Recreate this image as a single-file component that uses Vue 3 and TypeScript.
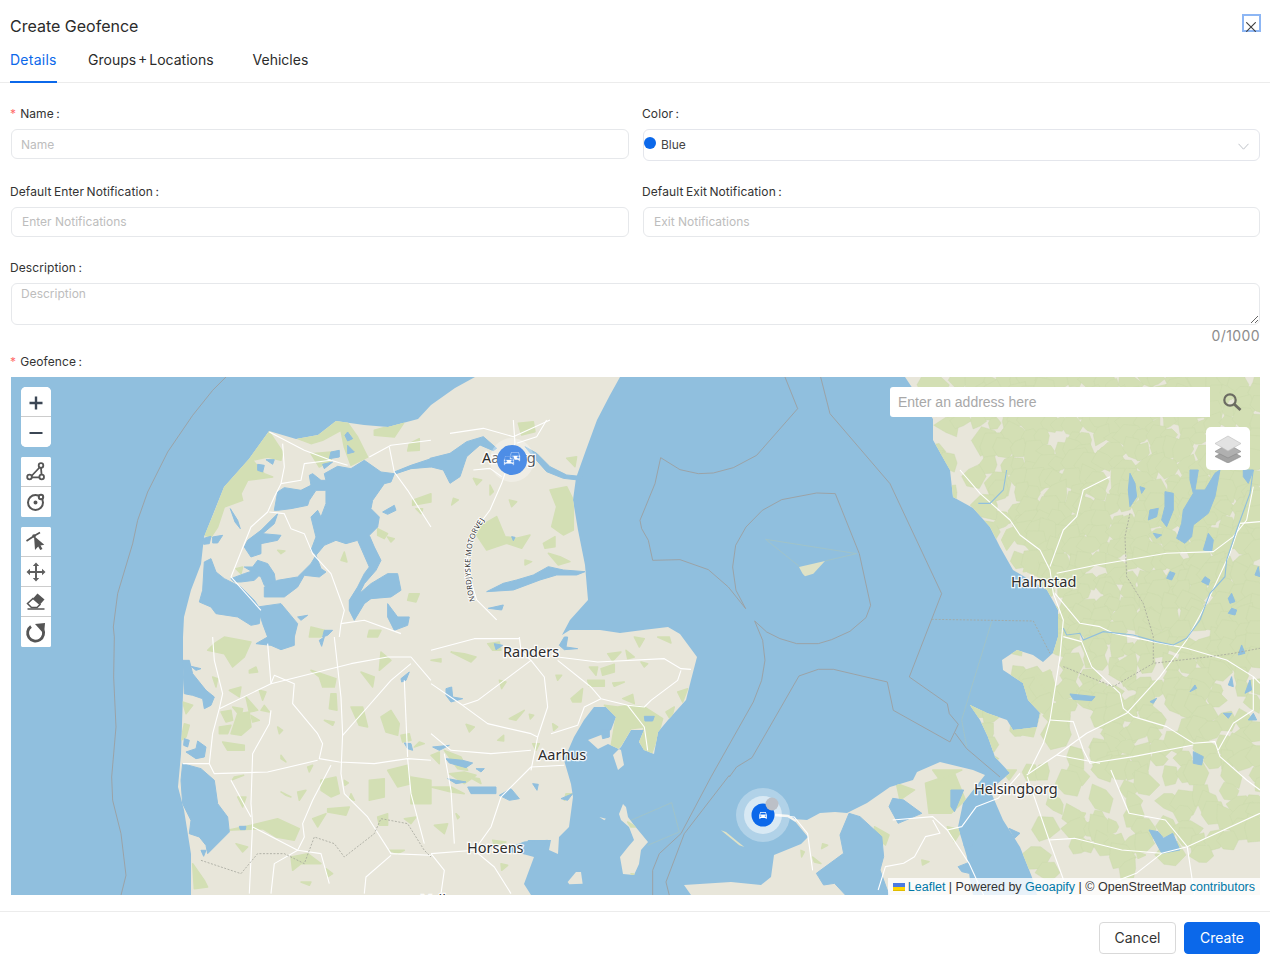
<script setup lang="ts">
import { ref } from 'vue'

const tabs = ['Details', 'Groups + Locations', 'Vehicles']
const activeTab = ref('Details')

// map traced in crop coordinates, each layer has its own origin and scale
interface Layer {
  t: string
  greens: string[]
  lakes: string[]
  roads: string[]
}

const carPath =
  'M18.92 6.01C18.72 5.42 18.16 5 17.5 5h-11c-.66 0-1.21.42-1.42 1.01L3 12v8c0 .55.45 1 1 1h1c.55 0 1-.45 1-1v-1h12v1c0 .55.45 1 1 1h1c.55 0 1-.45 1-1v-8l-2.08-5.99zM6.5 16c-.83 0-1.5-.67-1.5-1.5S5.67 13 6.5 13s1.5.67 1.5 1.5S7.33 16 6.5 16zm11 0c-.83 0-1.5-.67-1.5-1.5s.67-1.5 1.5-1.5 1.5.67 1.5 1.5-.67 1.5-1.5 1.5zM5 11l1.5-4.5h11L19 11H5z'

const jutland =
  'M475 377 L620 377 L610 395 L597 420 L586 450 L576 478 L573 500 L578 530 L585 565 L588 600 L570 620 L562 635 L570 630 L600 630 L620 633 L643 630 L668 627 L680 634 L697 657 L691 680 L686 700 L668 720 L658 732 L654 754 L644 750 L639 742 L644 730 L631 730 L621 747 L613 755 L618 770 L624 765 L621 750 L608 744 L598 749 L588 740 L601 735 L611 730 L616 717 L606 707 L594 707 L584 720 L574 737 L564 760 L571 784 L573 797 L569 827 L559 837 L558 854 L549 850 L551 840 L528 840 L523 854 L534 857 L524 884 L531 895 L191 895 L191 854 L184 810 L178 787 L181 754 L183 694 L183 637 L184 617 L191 590 L201 564 L204 537 L224 487 L249 459 L269 431 L296 439 L318 435 L336 421 L364 425 L388 427 L418 419 L431 405 L455 388 Z'
const sweden =
  'M905 377 L1260 377 L1260 895 L1037 895 L1033 880 L1028 867 L1020 847 L1003 820 L990 790 L1010 773 L995 757 L988 737 L980 720 L970 705 L987 713 L1007 720 L1013 730 L1037 727 L1040 713 L1028 700 L1023 683 L1003 670 L1002 660 L1017 650 L1033 655 L1043 662 L1053 653 L1058 637 L1058 610 L1047 590 L1013 570 L1000 547 L990 527 L973 508 L953 497 L950 470 L933 440 L933 419 Z'
const samso =
  'M623 804 L626 807 L628 817 L634 825 L648 842 L641 850 L639 864 L634 875 L623 874 L620 857 L628 847 L634 840 L629 827 L621 820 L619 814 Z'
const zealand =
  'M793 819 L807 820 L820 813 L835 812 L847 813 L867 803 L890 787 L913 780 L917 772 L940 762 L973 770 L985 775 L963 803 L958 827 L967 857 L970 880 L973 895 L691 895 L684 885 L731 882 L761 885 L771 877 L774 855 L801 844 L808 837 Z'

const layers: Layer[] = [
  {
    t: 'translate(11 377) scale(.3333)',
    greens: [
      '775,165 815,225 810,250 770,240 725,250 760,290 785,300 710,310 690,350 695,370 640,390 620,450 600,480 580,475 610,410 640,330 700,260',
      '860,185 975,130 1005,130 1040,180 1070,240 1020,265 1000,210 990,160 935,190 900,200',
      '1090,160 1180,135 1150,180 1090,175',
      '900,230 960,225 960,250 925,270',
      '1195,200 1225,185 1225,220 1190,222',
      '1100,455 1130,470 1120,485 1100,475',
      '1205,370 1260,350 1260,375 1205,385',
      '1215,395 1235,395 1230,410',
      '1195,650 1225,650 1215,675 1190,670',
      '1000,525 1008,555 990,550',
      '800,520 822,522 810,530',
      '675,575 695,570 690,590',
      '900,750 940,760 930,780 895,780',
      '1075,760 1110,760 1100,780 1070,780',
      '1130,480 1150,485 1140,495'
    ],
    lakes: [
      '580,555 600,545 615,585 640,605 690,630 730,670 750,700 745,740 720,745 680,720 615,710 600,690 565,675 575,640',
      '740,690 810,680 860,740 850,780 770,780 755,740',
      '790,400 800,345 820,332 870,340 900,325 895,295 905,290 930,310 945,310 940,290 980,268 1020,275 1060,250 1110,285 1150,290 1140,315 1120,320 1085,370 1080,395 1105,420 1100,450 1075,475 1090,510 1110,550 1095,580 1060,620 1045,650 1080,620 1130,590 1160,590 1170,640 1140,660 1080,665 1060,680 1030,730 1015,700 1015,670 1040,630 1060,590 1075,570 1040,490 1005,500 975,490 940,505 915,535 900,520 915,480 900,420 920,400 930,420 945,380 945,340 915,340 895,370 890,385 840,395 800,400',
      '800,410 790,440 755,470 810,475 800,490 750,500 750,530 720,540 700,510 710,490 750,460 780,430',
      '725,570 740,550 770,560 790,590 795,625 780,630 760,625 750,600 700,570',
      '660,605 700,590 730,580 750,590 730,610 690,615 670,615',
      '760,630 800,610 860,600 900,560 915,535 930,575 945,585 925,600 880,595 860,630 820,660 760,660',
      '1150,285 1200,265 1260,245 1260,270 1200,275 1155,290',
      '1010,165 1025,185 1010,192 1002,175',
      '1010,205 1030,225 1010,230',
      '960,225 985,220 985,240 955,245',
      '935,262 965,255 940,275',
      '740,262 760,265 755,285 740,280',
      '765,248 790,248 785,262',
      '658,395 680,430 688,455 672,435',
      '575,485 600,478 595,500 578,502',
      '605,480 635,475 620,498 605,498',
      '1115,405 1150,385 1155,400 1130,412',
      '1130,680 1160,720 1195,720 1190,745 1150,760 1130,720',
      '940,760 965,760 950,775 935,780',
      '860,720 890,715 870,730'
    ],
    roads: [
      '775,165 880,220 960,250 1010,265',
      '815,200 820,270 810,320 790,360 770,405 720,450 660,600 750,700',
      '810,320 870,310 880,260 960,250',
      '775,405 820,410 840,455 880,470 905,530 960,590 1000,700 990,740 985,780',
      '990,740 1060,730 1170,770',
      '1075,240 1140,205 1260,190',
      '1135,210 1150,285 1190,340 1260,450'
    ]
  },
  {
    t: 'translate(11 637) scale(.3333)',
    greens: [
      '610,20 640,0 720,15 700,60 665,90 640,50 590,40',
      '715,100 735,90 740,105 715,108',
      '605,120 620,125 615,150',
      '655,160 690,150 685,180',
      '745,160 765,165 755,190',
      '630,225 660,220 665,250 645,255',
      '665,210 695,215 690,240',
      '680,230 715,225 720,270 690,295 660,290 670,260',
      '705,180 740,220 715,225',
      '625,270 660,265 650,290 625,290',
      '720,235 745,250 725,255',
      '635,315 700,325 700,340 650,340',
      '800,270 815,280 805,290',
      '760,205 775,225 750,220',
      '900,100 975,125 970,150 935,150 925,120',
      '1050,105 1090,120 1085,150',
      '1110,45 1140,70 1105,100',
      '960,170 975,170 978,220 955,215',
      '1020,210 1055,210 1070,270 1045,265',
      '1110,240 1140,220 1165,260 1160,295 1125,285',
      '940,250 970,255 965,265',
      '810,355 825,375 810,365',
      '810,465 840,480 825,475',
      '860,465 885,460 865,490',
      '930,430 975,420 985,470 960,480 930,460',
      '1130,400 1190,385 1200,440 1160,450',
      '1075,430 1120,425 1120,480 1075,490',
      '1200,420 1260,430 1260,500 1200,500',
      '890,390 905,385 895,405',
      '1000,430 1012,438 1002,445',
      '950,515 1015,510 1005,535 950,525',
      '905,545 945,530 920,570',
      '680,480 705,480 695,510',
      '670,420 698,415 665,428',
      '650,580 720,565 800,545 865,575 850,610 795,600 755,575',
      '840,660 890,650 930,680 870,680 845,700',
      '675,620 710,630 695,645',
      '515,195 545,205 525,230',
      '520,260 535,265 525,300 510,310',
      '545,680 580,730 590,750 550,755',
      '1180,545 1215,540 1200,560',
      '1100,540 1130,530 1130,565 1105,565',
      '870,735 900,735 895,745',
      '945,695 965,710 950,720',
      '1135,640 1180,640 1160,650',
      '1225,315 1240,320 1210,330',
      '1020,470 1030,490 1015,485',
      '1170,295 1195,290 1200,310 1175,315'
    ],
    lakes: [
      '515,70 535,70 545,110 585,160 610,180 600,205 580,215 575,185 545,175 520,170',
      '540,88 570,95 555,100',
      '520,305 535,310 530,330 518,325',
      '525,345 555,335 560,312 585,330 580,360 555,365',
      '515,380 570,395 610,430 620,500 650,540 655,585 590,650 585,625 565,600 535,590 540,550 515,500 510,430',
      '570,640 585,640 578,658',
      '1170,125 1195,105 1185,130 1172,135',
      '1180,318 1200,320 1205,340 1190,335',
      '685,568 705,568 703,578 688,578',
      '925,10 940,0 932,28',
      '735,20 770,0 850,0 850,25 810,38 780,25'
    ],
    roads: [
      '605,0 610,70 635,170 625,215 605,290 595,380 515,380',
      '625,215 760,150 780,140 790,115 850,140 845,200 920,290 935,320 925,365 985,375 1090,380 1190,365 1260,370',
      '770,20 780,140',
      '780,140 900,110 1020,80 1130,60 1200,60 1260,130',
      '595,380 610,410 770,405 920,370',
      '780,220 775,260 725,350 720,500 725,560 715,770',
      '660,430 720,540',
      '970,0 990,180 995,290 990,410 1000,470 1070,540 1140,650 1260,655',
      '995,295 1070,210 1140,130 1200,80',
      '960,385 905,490 875,560 880,600 860,640 790,680 780,770',
      '725,570 860,640 930,650 955,740',
      '1190,365 1200,470 1240,620',
      '1180,130 1190,360',
      '1140,655 1065,720 1060,770'
    ]
  },
  {
    t: 'translate(431 637) scale(.3333)',
    greens: [
      '170,20 205,15 210,40 185,40',
      '60,45 100,50 135,60 120,75',
      '475,90 500,90 495,115',
      '510,95 550,82 550,105 515,115',
      '530,50 570,45 545,72',
      '585,40 610,60 590,65',
      '610,0 640,5 625,30',
      '680,0 715,0 720,18',
      '630,75 650,80 640,90',
      '470,130 520,130 520,148 475,148',
      '545,138 580,135 550,148',
      '420,185 455,155 450,195 425,195',
      '205,130 225,135 212,155',
      '375,115 392,115 380,130',
      '235,245 280,220 255,250',
      '295,232 308,235 298,246',
      '105,262 130,270 115,285',
      '200,310 218,295 218,312',
      '365,260 380,270 368,280',
      '740,165 770,155 755,195',
      '575,185 605,172 610,200',
      '520,205 560,210 595,205 640,210 695,245 680,300 660,355 640,345 625,310 640,270 600,275 570,325 545,350 540,330 550,270 555,240',
      '705,225 730,210 720,250',
      '0,355 25,345 25,380',
      '40,340 90,360 110,400 80,395',
      '55,410 100,405 135,415 100,440',
      '0,450 60,450 100,470 60,465',
      '10,565 50,560 40,590',
      '115,420 145,425 150,440',
      '305,320 325,320 315,340',
      '405,470 425,470 400,490',
      '0,70 30,65 30,75',
      '210,680 230,685 212,700',
      '75,530 85,540 80,545',
      '185,610 225,615 190,625',
      '600,710 620,712 605,722',
      '590,555 615,570 600,570',
      '1110,640 1120,645 1112,660',
      '1175,620 1190,625 1172,635',
      '1145,660 1170,680 1150,675'
    ],
    lakes: [
      '45,155 62,150 65,180 95,185 60,195 45,175',
      '385,25 400,0 410,0 405,30 440,35 400,38',
      '640,238 670,238 665,252 642,252',
      '510,280 535,280 535,300 515,305',
      '5,330 55,325 25,340',
      '45,365 95,370 125,378 105,392 55,378',
      '110,450 195,450 195,470 120,470',
      '50,425 105,435 75,440',
      '135,395 160,395 150,405',
      '205,475 240,455 265,485 235,490',
      '305,440 322,442 318,460',
      '390,485 425,470 410,490',
      '190,20 215,25 195,38',
      '230,635 280,615 350,610 330,640 280,650 240,645'
    ],
    roads: [
      '265,0 270,40 300,70 340,120 350,210 320,300 300,400',
      '0,40 130,5 265,5',
      '300,70 140,190 95,205 0,140',
      '95,205 170,260 300,290 320,300',
      '300,340 180,350 60,340 0,290',
      '380,70 480,150 510,185 590,205 640,270 650,340',
      '380,60 500,75 700,65 750,95 780,97',
      '750,100 740,130 660,190 640,210 590,205',
      '510,185 460,210 440,265 360,290',
      '400,385 300,390 210,480 180,570 130,640 0,650',
      '40,350 60,460 70,620',
      '130,640 190,690 240,770',
      '0,650 40,700 30,770',
      '1035,535 1090,540 1130,590 1145,700'
    ]
  },
  {
    t: 'translate(700 770) scale(.3636 .3333)',
    greens: [
      '620,40 700,10 730,90 690,130 630,130',
      '480,170 520,195 510,225 480,200',
      '540,40 590,60 550,90',
      '680,170 720,180 700,215',
      '610,270 630,275 612,285',
      '640,0 720,0 660,30',
      '760,60 800,90 770,110',
      '1040,125 1060,130 1050,150',
      '1120,190 1140,195 1125,205',
      '1200,245 1225,255 1205,265',
      '830,0 870,0 850,30'
    ],
    lakes: [
      '410,130 440,140 470,170 500,200 505,260 495,300 520,375 400,375 370,340 340,345 320,310 370,270 395,250 385,195',
      '530,85 560,90 610,130 545,160 520,110',
      '690,60 725,60 700,125 690,110',
      '725,225 750,225 740,235',
      '710,290 745,275 740,310 720,305',
      '850,175 880,190 865,205',
      '1235,180 1260,185 1275,205 1300,190 1320,240 1270,250'
    ],
    roads: [
      '530,150 640,140 680,180 720,170 760,110 820,85 880,10',
      '640,150 660,190 620,200 590,260 560,280 510,290 490,360',
      '680,180 740,280 780,375',
      '900,20 960,210 1000,330',
      '960,210 1030,205 1160,240 1270,250 1340,230 1540,130',
      '1130,0 1180,130 1280,150 1340,230 1360,375',
      '1270,250 1200,310 1080,360'
    ]
  },
  {
    t: 'translate(900 470) scale(.3333)',
    greens: [
      '235,115 265,115 255,130',
      '280,160 300,140 310,170',
      '320,180 345,170 350,200 320,240 305,210',
      '380,270 420,250 405,300 370,305',
      '405,620 450,600 470,660 440,665',
      '470,690 510,690 510,730 470,720',
      '350,750 420,730 400,800 340,790'
    ],
    lakes: [
      '870,0 895,0 885,60 915,60 945,10 960,0 945,80 925,130 880,165 875,200 855,220 830,205 845,160 850,120 880,70 870,30',
      '690,10 705,40 710,80 690,110 685,60',
      '795,65 820,70 820,120 800,170 785,150 795,110',
      '750,120 775,115 770,140 745,150',
      '925,190 940,210 935,245 910,240',
      '760,190 785,195 770,205',
      '810,305 825,310 815,330 800,325',
      '915,320 930,330 925,345 905,335',
      '995,370 1005,395 990,400 985,385',
      '995,415 1010,420 1005,435 985,430',
      '1025,525 1035,550 1015,555',
      '995,620 1000,650 985,645',
      '1050,630 1055,660 1035,670',
      '885,645 890,655 870,665',
      '770,685 760,700 750,695',
      '510,672 585,680 575,692 520,688',
      '970,730 995,730 985,745',
      '1060,730 1070,750 1045,750',
      '880,845 910,860 905,885 880,880',
      '1060,0 1045,40 1030,20 1030,0',
      '1075,290 1080,320 1065,315',
      '720,50 735,55 725,70'
    ],
    roads: [
      '180,0 240,70 330,150 360,195 420,240 450,300 460,370 490,450 480,560 450,750 430,820 385,910',
      '450,290 490,180 530,140 550,60 630,20',
      '470,310 590,285 800,250 940,245 1000,200 1040,150 1060,50',
      '1080,155 1020,160 990,250 920,400 860,510 780,620 680,730 560,790 470,855 380,915',
      '465,370 540,460 600,470 640,490 760,515 860,535 980,570 1060,620 1080,640',
      '490,500 545,515 575,590 660,670 670,715 700,740 800,770 880,820 945,815 960,860 1040,930 1080,960',
      '450,750 520,755 550,840 570,880 700,860 880,825',
      '955,840 1000,760 1060,720 1060,620',
      '470,855 600,880'
    ]
  },
  {
    t: 'translate(450 420) scale(.3333)',
    greens: [
      '300,210 350,200 370,240 370,330 340,345 305,320 320,260',
      '205,10 250,5 255,35 215,45',
      '70,330 140,290 165,350 200,355 240,345 215,385 170,370 110,390',
      '225,420 245,425 225,435',
      '280,370 315,350 315,380 285,385',
      '350,115 380,110 375,140',
      '70,175 95,180 80,195',
      '120,195 130,215 120,225',
      '178,240 200,245 185,260',
      '10,235 25,240 5,255',
      '295,400 330,410 360,425 325,435'
    ],
    lakes: [
      '-60,115 0,100 50,65 100,50 140,85 130,92 90,75 50,110 30,170 0,190 -20,150 -60,140',
      '225,80 260,100 300,140 350,165 400,170 385,180 340,175 290,155 250,110',
      '110,515 160,490 200,480 250,465 295,440 340,450 405,455 380,465 320,465 270,480 190,510',
      '115,565 160,555 155,570',
      '185,350 195,352 190,362'
    ],
    roads: [
      '190,0 195,70 155,190 120,270 60,350 50,440 80,540 140,600',
      '0,40 100,25 190,50 300,0',
      '200,70 260,50 290,0',
      '70,150 120,145 155,170'
    ]
  }
]

// sea borders in the crop coordinates of the strait
const seaLines = [
  '555,0 593,95 470,235 400,272 340,288 295,290 240,278 182,242 165,320 120,430 125,455 145,490 158,550 240,548 325,578 385,630 437,695 408,640 398,570 407,505 438,450 487,400 545,368 650,348 706,350 778,530 812,685 798,722 750,763 695,788 655,800 590,800 540,785 500,765 464,732 488,790 495,850 485,910 460,975 333,1200',
  '662,0 690,110 870,320 1025,650 928,900 1042,980 1048,1010 1075,1042 1050,1095 880,1000 862,915 700,877 655,877 597,897 456,1142 410,1170 388,1200',
  '1065,1068 1100,1115 1200,1200'
]

// forest blobs for the Swedish side, seeded so every run draws the same map
let seed = 41
function rnd() {
  seed = (seed * 16807) % 2147483647
  return seed / 2147483647
}
function blob(cx: number, cy: number, r: number) {
  const n = 6
  const pts: string[] = []
  for (let i = 0; i < n; i++) {
    const a = (i / n) * Math.PI * 2
    const d = r * (0.6 + rnd() * 0.7)
    pts.push(`${(cx + Math.cos(a) * d).toFixed(1)},${(cy + Math.sin(a) * d).toFixed(1)}`)
  }
  return pts.join(' ')
}
function density(x: number, y: number) {
  if (y < 670) return x < 960 + (y - 400) * 0.4 ? 0.32 : 0.97
  if (y < 770) return x < 1085 ? 0.45 : 0.75
  if (y < 840) return x < 1070 ? 0.1 : 0.6
  return 0.1
}
const forest: string[] = []
for (let y = 377; y < 895; y += 14) {
  for (let x = 930; x < 1265; x += 14) {
    if (rnd() < density(x, y)) forest.push(blob(x + rnd() * 8, y + rnd() * 8, 8 + rnd() * 7))
  }
}

const placeNames = [
  { name: 'Aalborg', x: 482, y: 463 },
  { name: 'Halmstad', x: 1011, y: 587 },
  { name: 'Randers', x: 503, y: 657 },
  { name: 'Aarhus', x: 538, y: 760 },
  { name: 'Horsens', x: 467, y: 853 },
  { name: 'Helsingborg', x: 974, y: 794 },
  { name: 'Vejle', x: 422, y: 905 }
]
</script>

<template>
  <div class="dialog">
    <header class="head">
      <h1 class="title">Create Geofence</h1>
      <button class="close" type="button" aria-label="Close">
        <svg width="10" height="10" viewBox="0 0 10 10">
          <path d="M.3.3l9.400 9.400M9.700.3L.3 9.700" stroke="#3c3c3c" stroke-width="1.1" fill="none" />
        </svg>
      </button>
    </header>

    <nav class="tabs">
      <a
        v-for="tab in tabs"
        :key="tab"
        class="tab"
        :class="{ active: tab === activeTab }"
        @click="activeTab = tab"
      >{{ tab }}</a>
    </nav>

    <form class="form" @submit.prevent>
      <div class="row">
        <div class="field">
          <label class="label"><span class="req">*</span>Name :</label>
          <input class="input" placeholder="Name" />
        </div>
        <div class="field">
          <label class="label">Color :</label>
          <div class="select">
            <span class="dot"></span>
            <span>Blue</span>
            <svg class="chevron" width="11" height="7" viewBox="0 0 11 7">
              <path d="M.5.8l5 5.400 5-5.400" stroke="#bfc3c9" fill="none" />
            </svg>
          </div>
        </div>
      </div>

      <div class="row second">
        <div class="field">
          <label class="label">Default Enter Notification :</label>
          <input class="input wide-pad" placeholder="Enter Notifications" />
        </div>
        <div class="field">
          <label class="label">Default Exit Notification :</label>
          <input class="input wide-pad" placeholder="Exit Notifications" />
        </div>
      </div>

      <div class="desc">
        <label class="label">Description :</label>
        <textarea class="input area" placeholder="Description"></textarea>
        <div class="count">0/1000</div>
      </div>

      <label class="label geo-label"><span class="req">*</span>Geofence :</label>

      <div class="map">
        <svg class="map-art" viewBox="11 377 1249 518" width="1249" height="518">
          <defs>
            <clipPath id="sweden-clip"><path :d="sweden" /></clipPath>
            <clipPath id="land-clip">
              <path :d="jutland" /><path :d="sweden" /><path :d="zealand" /><path :d="samso" />
            </clipPath>
          </defs>

          <rect x="11" y="377" width="1249" height="518" fill="#90bfde" />
          <path :d="jutland" class="land" />
          <path :d="sweden" class="land" />
          <path :d="zealand" class="land" />
          <path :d="samso" class="land" />

          <g clip-path="url(#sweden-clip)">
            <polygon v-for="(p, i) in forest" :key="i" :points="p" class="forest" />
          </g>

          <g clip-path="url(#land-clip)">
            <g v-for="(layer, i) in layers" :key="i" :transform="layer.t">
              <polygon v-for="(p, j) in layer.greens" :key="j" :points="p" class="green" />
            </g>
          </g>

          <g v-for="(layer, i) in layers" :key="'l' + i" :transform="layer.t">
            <polygon v-for="(p, j) in layer.lakes" :key="j" :points="p" class="lake" />
          </g>

          <g v-for="(layer, i) in layers" :key="'r' + i" :transform="layer.t">
            <polyline v-for="(p, j) in layer.roads" :key="j" :points="p" class="road" />
          </g>

          <g transform="translate(600 377) scale(.3333)">
            <polyline v-for="(p, i) in seaLines" :key="i" :points="p" class="border" />
            <polygon points="597,570 675,552 640,590 615,598 608,590" fill="#dfe2c6" />
            <polyline points="600,570 497,487 770,530 675,552" class="thin" />
          </g>
          <g transform="translate(431 637) scale(.3333)">
            <polyline points="840,420 750,590 685,650 665,700 665,775" class="border" />
            <polyline points="895,415 760,590 705,735 715,775" class="border" />
            <polygon points="870,580 885,585 940,630 925,625" fill="#dfe2c6" />
            <polygon points="435,705 450,705 455,740 415,742 410,735" fill="#e8e6da" />
            <polygon points="505,540 525,545 520,550" fill="#e8e6da" />
            <polyline points="600,550 722,497 745,585 650,625" class="thin" />
          </g>
          <g transform="translate(11 377) scale(.3333)">
            <polyline points="645,0 605,40 545,115 470,225 410,345 380,430 365,500 320,650 307,750 310,780" class="border" />
          </g>
          <g transform="translate(11 637) scale(.3333)">
            <polyline points="310,0 308,120 315,270 302,420 305,490 330,590 345,715 330,775" class="border" />
            <polyline points="570,670 630,690 690,710 740,650 820,650 880,680 910,600 970,620 1000,660 1090,590 1110,545 1190,560 1240,640 1260,660" class="dashed" />
          </g>
          <g transform="translate(900 470) scale(.3333)">
            <polyline points="95,448 400,453 450,550" class="dashed" />
            <polyline points="275,455 200,700 185,750 200,830" class="thin" />
            <polyline points="490,590 640,650 760,580 930,560 1000,550 1080,535" class="dashed" />
            <polyline points="690,130 675,200 680,320 730,400 760,500 760,580" class="dashed" />
            <polyline points="490,475 500,495 540,490 550,510 610,485 700,495 770,515 820,525 860,505 900,450 930,370 975,320 980,270 1010,180 1050,70 1060,0" class="river" />
            <polyline points="320,0 310,60 270,100 235,100" class="river" />
          </g>

          <path id="motorway" d="M475 601C467 570 470 545 478 530L491 510" fill="none" />
          <text class="road-name"><textPath href="#motorway">NORDJYSKE MOTORVEJ</textPath></text>

          <text v-for="p in placeNames" :key="p.name" :x="p.x" :y="p.y" class="place">{{ p.name }}</text>

          <circle cx="512" cy="460" r="22" fill="#fff" opacity=".3" />
          <circle cx="512" cy="460" r="15" fill="#4d8de6" />
          <g fill="#fff">
            <path :d="carPath" transform="translate(508 449) scale(.58)" stroke="#4d8de6" stroke-width="1" />
            <path :d="carPath" transform="translate(502 453) scale(.58)" stroke="#4d8de6" stroke-width="1.5" />
          </g>

          <polyline points="775,815 788,816 796,821" fill="none" stroke="#f4f4f0" stroke-width="2.500" />
          <circle cx="763" cy="815" r="27" fill="#fff" opacity=".3" />
          <circle cx="763" cy="815" r="19" fill="#fff" opacity=".5" />
          <circle cx="763" cy="815" r="11.500" fill="#0b68ea" />
          <path :d="carPath" transform="translate(758 810) scale(.42)" fill="#fff" />
          <circle cx="772" cy="804" r="6.500" fill="#bcc0c7" />
        </svg>

        <div class="toolbar">
          <div class="tool-group round">
            <button class="tool" type="button">
              <svg width="14" height="14" viewBox="0 0 14 14"><path d="M7 .5v13M.5 7h13" stroke="#3b4654" stroke-width="2.400" /></svg>
            </button>
            <button class="tool" type="button">
              <svg width="14" height="14" viewBox="0 0 14 14"><path d="M.5 7h13" stroke="#3b4654" stroke-width="2" /></svg>
            </button>
          </div>
          <div class="tool-group">
            <button class="tool" type="button">
              <svg width="30" height="30" viewBox="0 0 30 30" fill="none" stroke="#555" stroke-width="1.800">
                <path d="M10.500 19L19 10M11 20.300h7M20 11l.6 7" />
                <circle cx="8.500" cy="20" r="2.300" /><circle cx="20.700" cy="20" r="2.300" /><circle cx="20" cy="8.500" r="2.300" />
              </svg>
            </button>
            <button class="tool" type="button">
              <svg width="30" height="30" viewBox="0 0 30 30" fill="none" stroke="#555" stroke-width="2">
                <circle cx="14.500" cy="15.500" r="7.500" />
                <circle cx="14.500" cy="15.500" r="1" fill="#555" />
                <circle cx="20" cy="10" r="2.200" fill="#fff" />
              </svg>
            </button>
          </div>
          <div class="tool-group">
            <button class="tool" type="button">
              <svg width="30" height="30" viewBox="0 0 30 30">
                <path d="M5.500 14l7.500-5 6-3.500" stroke="#555" stroke-width="1.700" fill="none" />
                <path d="M13 9l1 14 3.200-3.500 2 3.500 2.300-1-2-3.500 3.800-.8z" fill="#555" />
                <circle cx="13" cy="9" r="1.800" fill="#555" />
              </svg>
            </button>
            <button class="tool" type="button">
              <svg width="30" height="30" viewBox="0 0 30 30">
                <path d="M15 5.500l3.200 3.500h-2.200v5h5v-2.200l3.500 3.200-3.500 3.200v-2.200h-5v5h2.200l-3.200 3.500-3.200-3.500h2.200v-5h-5v2.200l-3.500-3.200 3.500-3.200v2.200h5v-5h-2.200z" fill="#5f5f5f" />
              </svg>
            </button>
            <button class="tool" type="button">
              <svg width="30" height="30" viewBox="0 0 30 30">
                <path d="M16.500 6.500l7 6-4.500 5-7-6z" fill="#555" />
                <path d="M12 11.500l7 6-3 3h-5.500l-4-4z" fill="#fff" stroke="#555" stroke-width="1.500" />
                <path d="M6.500 22h17" stroke="#555" stroke-width="1.500" />
              </svg>
            </button>
            <button class="tool" type="button">
              <svg width="30" height="30" viewBox="0 0 30 30">
                <path d="M10 9.500A8 8 0 1 0 21.500 12" fill="none" stroke="#555" stroke-width="2.800" />
                <path d="M14 7l10-1-1 11z" fill="#555" />
              </svg>
            </button>
          </div>
        </div>

        <div class="search">
          <input class="search-input" placeholder="Enter an address here" />
          <svg class="search-icon" width="20" height="20" viewBox="0 0 20 20" fill="none" stroke="#6b6b62">
            <circle cx="8" cy="8" r="5.700" stroke-width="2.200" />
            <path d="M12 12l6.500 6" stroke-width="2.800" />
          </svg>
        </div>

        <button class="layers" type="button">
          <svg width="30" height="28" viewBox="0 0 30 28">
            <path d="M15 14l13 7.500-13 6.500-13-6.500z" fill="#a3a3a3" stroke="#8a8a8a" stroke-width=".6" />
            <path d="M15 9l13 7.500-13 6.500-13-6.500z" fill="#b0b0b0" stroke="#8a8a8a" stroke-width=".6" />
            <path d="M15 1l13 7.500L15 16 2 8.500z" fill="#e2e2e2" stroke="#bdbdbd" stroke-width=".6" />
          </svg>
        </button>

        <div class="attribution">
          <svg class="flag" width="12" height="8" viewBox="0 0 12 8">
            <path fill="#4C7BE1" d="M0 0h12v4H0z" />
            <path fill="#FFD500" d="M0 4h12v3H0z" />
            <path fill="#E0BC00" d="M0 7h12v1H0z" />
          </svg>
          <a>Leaflet</a> | Powered by <a>Geoapify</a> | © OpenStreetMap <a>contributors</a>
        </div>
      </div>
    </form>

    <footer class="foot">
      <button class="btn cancel" type="button">Cancel</button>
      <button class="btn primary" type="button">Create</button>
    </footer>
  </div>
</template>

<style scoped>
.dialog {
  width: 1270px;
  height: 961px;
  background: #fff;
  color: #2b2b2b;
  font-family: Inter, "Noto Sans", sans-serif;
  overflow: hidden;
  box-sizing: border-box;
}

.head {
  height: 50px;
  display: flex;
  justify-content: space-between;
  padding: 14px 9px 0 10px;
  box-sizing: border-box;
}

.title {
  margin: 0;
  font-size: 16px;
  font-weight: 400;
  line-height: 24px;
}

.close {
  width: 19px;
  height: 18px;
  padding: 6px 0 0 2px;
  box-sizing: border-box;
  border: 2px solid #8db6f4;
  background: none;
  display: flex;
  align-items: flex-start;
  overflow: visible;
}
.close svg {
  display: block;
  flex: none;
}

.tabs {
  display: flex;
  height: 33px;
  padding-left: 10px;
  border-bottom: 1px solid #ececec;
  box-sizing: border-box;
}

.tab {
  font-size: 14px;
  line-height: 20px;
  margin-right: 31px;
  box-sizing: border-box;
  height: 33px;
  min-width: 47px;
  word-spacing: -2px;
  cursor: pointer;
}
.tab:last-child {
  margin-left: 8px;
}
.tab.active {
  color: #0b68ea;
  border-bottom: 2px solid #0b68ea;
  letter-spacing: 0.25px;
}

.form {
  padding: 23px 10px 0;
}

.row {
  display: grid;
  grid-template-columns: 619px 618px;
  column-gap: 13px;
}
.row.second {
  margin-top: 25px;
}

.label {
  display: block;
  font-size: 12px;
  line-height: 16px;
  color: #333;
  word-spacing: -1px;
  letter-spacing: 0.1px;
}

.req {
  color: #ff6b6b;
  margin-right: 4px;
}

.input {
  display: block;
  width: calc(100% - 1px);
  height: 30px;
  margin: 7px 0 0 1px;
  padding: 0 9px;
  box-sizing: border-box;
  border: 1px solid #e6e8eb;
  border-radius: 6px;
  font: 12px Inter, sans-serif;
  outline: none;
}
.input::placeholder {
  color: #bdbdbd;
}
.wide-pad {
  padding: 0 10px 2px;
}

.select {
  height: 32px;
  margin: 7px 0 -2px 1px;
  padding-bottom: 2px;
  border: 1px solid #e4e6ec;
  border-radius: 6px;
  box-sizing: border-box;
  display: flex;
  align-items: center;
  font-size: 12px;
  color: #444;
  position: relative;
}

.dot {
  width: 12px;
  height: 12px;
  border-radius: 50%;
  background: #0b68ea;
  margin: -3px 5px 0 0;
}

.chevron {
  position: absolute;
  right: 10px;
  top: 13px;
}

.desc {
  margin-top: 23px;
}

.area {
  height: 42px;
  padding-top: 2px;
  resize: vertical;
  margin-top: 7px;
  width: 1249px;
}

.count {
  text-align: right;
  font-size: 14px;
  line-height: 22px;
  color: #8c8c8c;
  letter-spacing: 0.4px;
}

.geo-label {
  margin-top: 7px;
}

.map {
  position: relative;
  width: 1249px;
  height: 518px;
  margin: 7px 0 0 1px;
  overflow: hidden;
}

.map-art {
  display: block;
}

.land {
  fill: #e8e6da;
}
.green {
  fill: #d3dfb4;
  stroke: #d3dfb4;
  stroke-width: 1.5;
  stroke-linejoin: round;
  vector-effect: non-scaling-stroke;
}
.forest {
  fill: #d3dfb4;
  stroke: #c9d9ab;
  stroke-width: 0.4;
}
.lake {
  fill: #90bfde;
  stroke: #90bfde;
  stroke-width: 1;
  stroke-linejoin: round;
  vector-effect: non-scaling-stroke;
}
.road {
  fill: none;
  stroke: #fff;
  stroke-width: 1.1;
  stroke-linejoin: round;
  vector-effect: non-scaling-stroke;
}
.border {
  fill: none;
  stroke: #9c9fa0;
  stroke-width: 0.9;
  vector-effect: non-scaling-stroke;
}
.thin {
  fill: none;
  stroke: #a6c4c0;
  stroke-width: 0.7;
  vector-effect: non-scaling-stroke;
}
.dashed {
  fill: none;
  stroke: #a5a69c;
  stroke-width: 0.8;
  stroke-dasharray: 2 1.5;
  vector-effect: non-scaling-stroke;
}
.river {
  fill: none;
  stroke: #90bfde;
  stroke-width: 1.1;
  vector-effect: non-scaling-stroke;
}

.place {
  font: 14.5px "Noto Sans", sans-serif;
  fill: #2d2d2d;
  stroke: rgba(255, 255, 255, 0.9);
  stroke-width: 2.5px;
  paint-order: stroke;
}
.road-name {
  font: 7.5px "Noto Sans", sans-serif;
  fill: #333;
  stroke: #fff;
  stroke-width: 1.5px;
  paint-order: stroke;
  letter-spacing: 0.2px;
}

.toolbar {
  position: absolute;
  left: 10px;
  top: 10px;
  display: flex;
  flex-direction: column;
  gap: 10px;
}

.tool-group {
  background: #fff;
  border-radius: 2px;
  overflow: hidden;
  display: flex;
  flex-direction: column;
}
.tool-group.round {
  border-radius: 5px;
}
.tool-group.round svg {
  transform: translateY(1px);
}

.tool {
  width: 30px;
  height: 30px;
  padding: 0;
  border: 0;
  border-bottom: 1px solid #ccc;
  background: #fff;
  display: flex;
  align-items: center;
  justify-content: center;
  box-sizing: border-box;
}
.tool:last-child {
  border-bottom: 0;
}

.search {
  position: absolute;
  left: 879px;
  top: 10px;
  display: flex;
  align-items: center;
}

.search-input {
  width: 320px;
  height: 30px;
  padding: 0 8px;
  box-sizing: border-box;
  border: 0;
  border-radius: 3px 0 0 3px;
  background: #fff;
  font: 14px "Liberation Sans", Arial, sans-serif;
  outline: none;
}
.search-input::placeholder {
  color: #a8a8a8;
}

.search-icon {
  margin-left: 12px;
}

.layers {
  position: absolute;
  left: 1195px;
  top: 50px;
  width: 44px;
  height: 43px;
  padding: 0;
  border: 0;
  border-radius: 5px;
  background: #fff;
  display: flex;
  align-items: center;
  justify-content: center;
}

.attribution {
  position: absolute;
  right: 0;
  bottom: 0;
  height: 17px;
  padding: 1px 5px 0;
  box-sizing: border-box;
  display: flex;
  align-items: center;
  white-space: pre;
  background: rgba(255, 255, 255, 0.8);
  font: 12.5px/16px "Liberation Sans", Arial, sans-serif;
  color: #333;
}
.attribution a {
  color: #0078a8;
}
.flag {
  margin-right: 3px;
}

.foot {
  position: absolute;
  left: 0;
  top: 911px;
  width: 1270px;
  height: 50px;
  border-top: 1px solid #ececec;
  box-sizing: border-box;
  display: flex;
  justify-content: flex-end;
  align-items: flex-start;
  gap: 8px;
  padding: 10px 10px 0 0;
}

.btn {
  height: 32px;
  width: 76px;
  padding: 0 0 2px;
  border: 1px solid #d9d9d9;
  border-radius: 4px;
  background: #fff;
  color: #333;
  font: 14px Inter, sans-serif;
}
.btn.cancel {
  width: 77px;
}
.btn.primary {
  background: #0b68ea;
  border-color: #0b68ea;
  color: #fff;
}
</style>
